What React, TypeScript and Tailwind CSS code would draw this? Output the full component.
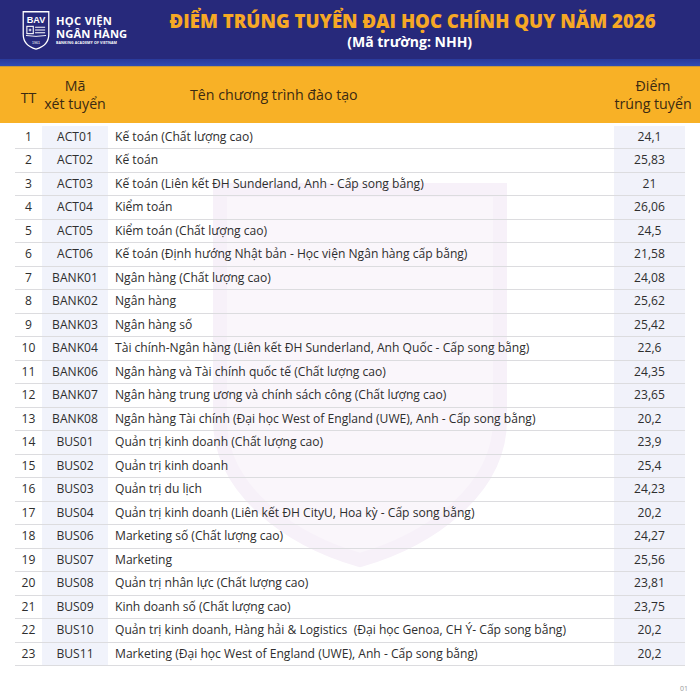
const rows: [string, string, string][] = [
  ['ACT01', 'Kế toán (Chất lượng cao)', '24,1'],
  ['ACT02', 'Kế toán', '25,83'],
  ['ACT03', 'Kế toán (Liên kết ĐH Sunderland, Anh - Cấp song bằng)', '21'],
  ['ACT04', 'Kiểm toán', '26,06'],
  ['ACT05', 'Kiểm toán (Chất lượng cao)', '24,5'],
  ['ACT06', 'Kế toán (Định hướng Nhật bản - Học viện Ngân hàng cấp bằng)', '21,58'],
  ['BANK01', 'Ngân hàng (Chất lượng cao)', '24,08'],
  ['BANK02', 'Ngân hàng', '25,62'],
  ['BANK03', 'Ngân hàng số', '25,42'],
  ['BANK04', 'Tài chính-Ngân hàng (Liên kết ĐH Sunderland, Anh Quốc - Cấp song bằng)', '22,6'],
  ['BANK06', 'Ngân hàng và Tài chính quốc tế (Chất lượng cao)', '24,35'],
  ['BANK07', 'Ngân hàng trung ương và chính sách công (Chất lượng cao)', '23,65'],
  ['BANK08', 'Ngân hàng Tài chính (Đại học West of England (UWE), Anh - Cấp song bằng)', '20,2'],
  ['BUS01', 'Quản trị kinh doanh (Chất lượng cao)', '23,9'],
  ['BUS02', 'Quản trị kinh doanh', '25,4'],
  ['BUS03', 'Quản trị du lịch', '24,23'],
  ['BUS04', 'Quản trị kinh doanh (Liên kết ĐH CityU, Hoa kỳ - Cấp song bằng)', '20,2'],
  ['BUS06', 'Marketing số (Chất lượng cao)', '24,27'],
  ['BUS07', 'Marketing', '25,56'],
  ['BUS08', 'Quản trị nhân lực (Chất lượng cao)', '23,81'],
  ['BUS09', 'Kinh doanh số (Chất lượng cao)', '23,75'],
  ['BUS10', 'Quản trị kinh doanh, Hàng hải & Logistics  (Đại học Genoa, CH Ý- Cấp song bằng)', '20,2'],
  ['BUS11', 'Marketing (Đại học West of England (UWE), Anh - Cấp song bằng)', '20,2'],
];

function Logo() {
  return (
    <div className="flex items-center gap-[4px]">
      <svg width="32" height="42" viewBox="0 0 34 46">
        <path d="M3 3 H31 V28 C31 37 24 42 17 44 C10 42 3 37 3 28 Z" fill="none" stroke="#fff" strokeWidth="1.4" />
        <text x="17" y="15" textAnchor="middle" fill="#fff" fontSize="10" fontWeight="700" fontFamily="'Liberation Sans', sans-serif">BAV</text>
        <rect x="7" y="19" width="7" height="8" fill="none" stroke="#fff" strokeWidth="1.2" />
        <path d="M9 23 H12 M10.5 21.5 V24.5" stroke="#fff" strokeWidth="1" />
        <path d="M16 20 H27 M16 23 H27 M16 26 H27" stroke="#fff" strokeWidth="1.2" />
        <path d="M6 29 Q17 31 28 29" stroke="#fff" strokeWidth="1" fill="none" />
        <text x="17" y="38" textAnchor="middle" fill="#fff" fontSize="4" fontFamily="'Liberation Sans', sans-serif">1961</text>
      </svg>
      <div className="flex flex-col text-white">
        <span className="text-[11.2px] font-bold leading-[13px] tracking-[0.3px]">HỌC VIỆN</span>
        <span className="text-[11.2px] font-bold leading-[13px] tracking-[0.1px]">NGÂN HÀNG</span>
        <span className="text-[3.6px] font-bold leading-[5px] tracking-[0.1px]">BANKING ACADEMY OF VIETNAM</span>
      </div>
    </div>
  );
}

export default function App() {
  return (
    <div className="w-[700px] h-[700px] overflow-hidden bg-white text-[#2e2e2e] font-['Open_Sans',sans-serif] relative">
      {/* Watermark shield */}
      <svg className="absolute left-[200px] top-[170px]" width="320" height="400" viewBox="0 0 320 400">
        <path d="M20 20 H300 V250 C300 320 230 370 160 390 C90 370 20 320 20 250 Z" fill="#faf6fb" stroke="#f7f1f9" strokeWidth="14" />
      </svg>

      {/* Header */}
      <div className="h-[59px] bg-[#27297b] flex items-center pl-[20px] relative">
        <Logo />
        <div className="flex-1 flex flex-col items-center pr-[2px] pt-[2px]">
          <h1 className="text-[18.6px] font-extrabold text-[#f6a825] leading-[22px]">ĐIỂM TRÚNG TUYỂN ĐẠI HỌC CHÍNH QUY NĂM 2026</h1>
          <p className="text-[14px] font-bold text-white leading-[20px] pr-[6px]">(Mã trường: NHH)</p>
        </div>
      </div>
      <div className="h-[7px] bg-gradient-to-b from-[#2a3a9a] to-[#2f4cb4] relative" />
      <div className="h-[1px] bg-[#c79a3c] relative" />

      {/* Column headers */}
      <div className="h-[56px] bg-[#f8b126] flex items-center px-[15px] text-[#3b2a12] text-[14.2px] leading-[18px] relative">
        <div className="w-[27px] text-center pt-[6px]">TT</div>
        <div className="w-[66px] text-center">Mã<br />xét tuyển</div>
        <div className="flex-1 pl-[82px]">Tên chương trình đào tạo</div>
        <div className="w-[80px] text-center -mr-[8px]">Điểm<br />trúng tuyển</div>
      </div>

      {/* Rows */}
      <div className="mx-[15px] mt-[2.5px] text-[12.1px] relative">
        {rows.map(([code, name, score], i) => (
          <div key={code} className="h-[23.5px] flex items-center border-b border-[#dcdcdf]">
            <div className="w-[27px] h-full flex items-center justify-center">{i + 1}</div>
            <div className="w-[66px] h-full flex items-center justify-center bg-[#eef1fa]/85">{code}</div>
            <div className="flex-1 h-full flex items-center pl-[7px] whitespace-pre">{name}</div>
            <div className="w-[71px] h-full flex items-center justify-center bg-[#eff0f9]/85">{score}</div>
          </div>
        ))}
      </div>

      <div className="absolute right-[12px] bottom-[6px] text-[7px] text-[#9a9a9a]">01</div>
    </div>
  );
}
